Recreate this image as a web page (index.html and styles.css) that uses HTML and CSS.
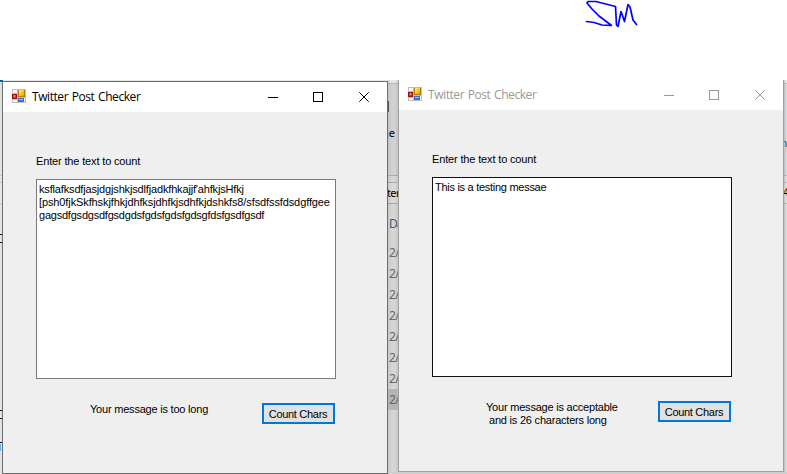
FILE: index.html
```
<!DOCTYPE html>
<html lang="en">
<head>
<meta charset="utf-8">
<title>Twitter Post Checker</title>
<link rel="stylesheet" href="styles.css">
</head>
<body>
<svg class="signature" width="90" height="40" viewBox="0 0 90 40"><path d="M16.5 21.5L24 22.5L32 25L41.500 25.500L29 16L22 9L17 3L18 1.500L26 1.500L45.500 6.500L46.500 25L48 26.500L51 11.500L54.500 21.500L58 4.500L60 7L63 20L66.500 24.500"/></svg>
<main class="desktop">
  <div class="top-edge"></div>
  <div class="ribbon"></div>
  <div class="strip"></div>
  <div class="header-row"></div>
  <div class="backdrop left-edge"><i class="accent"></i><i class="tick t1"></i><i class="tick t2"></i><i class="tick t3"></i><i class="tick t4"></i><i class="tick t5"></i><i class="link"></i></div>
  <div class="backdrop middle">
    <i class="glyph"></i><span class="name">ne</span><span class="filter">ter</span><span class="date-head">Da</span>
    <ul><li>2/</li><li>2/</li><li>2/</li><li>2/</li><li>2/</li><li>2/</li><li>2/</li><li class="selected">2/</li></ul>
  </div>
  <div class="backdrop right-edge"><span class="letter">n</span><span class="count">4</span></div>
  <div class="below"></div>

  <section class="window active">
    <header class="titlebar">
      <svg class="app-icon" width="14" height="14" viewBox="0 0 14 14"><use href="#form-icon"/></svg>
      <h1>Twitter Post Checker</h1>
      <svg class="controls" width="104" height="12" viewBox="0 0 104 12"><use href="#window-controls"/></svg>
    </header>
    <div class="form">
      <label><span class="w-label">Enter the text to count</span></label>
      <div class="textbox"><p class="l1">ksflafksdfjasjdgjshkjsdlfjadkfhkajjf'ahfkjsHfkj</p><p class="l2">[psh0fjkSkfhskjfhkjdhfksjdhfkjsdhfkjdshkfs8/sfsdfssfdsdgffgee</p><p class="l3">gagsdfgsdgsdfgsdgdsfgdsfgdsfgdsgfdsfgsdfgsdf</p></div>
      <footer><div class="result"><p class="r1">Your message is too long</p></div><button>Count Chars</button></footer>
    </div>
  </section>

  <section class="window inactive">
    <header class="titlebar">
      <svg class="app-icon" width="14" height="14" viewBox="0 0 14 14"><use href="#form-icon"/></svg>
      <h1>Twitter Post Checker</h1>
      <svg class="controls" width="104" height="12" viewBox="0 0 104 12"><use href="#window-controls"/></svg>
    </header>
    <div class="form">
      <label><span class="w-label">Enter the text to count</span></label>
      <div class="textbox"><p class="l4">This is a testing messae</p></div>
      <footer><div class="result"><p class="r2">Your message is acceptable</p><p class="r3">and is 26 characters long</p></div><button>Count Chars</button></footer>
    </div>
  </section>
</main>
<svg class="defs" width="0" height="0">
  <defs>
    <linearGradient id="gold" x2="1" y2="1"><stop stop-color="#fff0a0"/><stop offset=".5" stop-color="#fac832"/><stop offset="1" stop-color="#dc9a08"/></linearGradient>
    <g id="form-icon">
      <path d="M0 0H14V14H0Z" fill="#bdbdbd"/><path d="M1 1H5V4H1ZM1 11H5V13H1ZM12 9H13V13H12Z" fill="#fff"/>
      <path d="M0 5H5V10H0Z" fill="#9c1610"/><path d="M1 6H4V9H1Z" fill="#d23b28"/><path d="M2 6H3V8H2Z" fill="#f09a86"/>
      <path d="M6 1H13V8H6Z" fill="#b97c00"/><path d="M7 1H12V7H7Z" fill="url(#gold)"/>
      <path d="M6 9H12V13H6Z" fill="#3e6fd0"/><path d="M7 10H11V11H7Z" fill="#9cc0ff"/>
    </g>
    <g id="window-controls" fill="none" stroke="currentColor">
      <path d="M1 6.500H11M46.500 1.500H55.500V10.500H46.500Z" shape-rendering="crispEdges"/><path d="M92.300 1.300L101.700 10.700M101.700 1.300L92.300 10.700"/>
    </g>
  </defs>
</svg>
</body>
</html>
```
FILE: styles.css
```
* { box-sizing: border-box; }
body { margin: 0; width: 787px; height: 474px; overflow: hidden; background: #fff; font: 11px/13px "Liberation Sans", sans-serif; color: #000; }
h1, p, ul { margin: 0; padding: 0; }
p, span, h1 { white-space: pre; }
.signature { position: absolute; left: 570px; top: 0; fill: none; stroke: #00f; stroke-width: 1.7; stroke-linejoin: round; stroke-linecap: round; }
.defs { position: absolute; }
.desktop { position: absolute; top: 80px; left: 0; width: 787px; height: 394px; overflow: hidden; background: #d5d5d5; display: flex; flex-direction: column; }
.top-edge { height: 3px; flex: none; background: #e6e6e6; }
.ribbon { height: 93px; flex: none; background: #cfd1d3; border-top: 1px solid #b7b7b7; border-bottom: 1px solid #adadad; }
.strip { height: 7px; flex: none; background: #d6d6d6; border-bottom: 1px solid #ababab; }
.header-row { height: 21px; flex: none; background: #d9d9d9; border-bottom: 1px solid #ababab; }
.backdrop { position: absolute; top: 0; height: 394px; overflow: hidden; }
.backdrop > * { position: absolute; }
.left-edge { left: 0; width: 3px; background: rgba(255,255,255,.35); }
.accent { top: 0; left: 0; width: 7px; height: 2px; background: #075c9c; }
.tick { left: 0; width: 3px; height: 1px; background: #111; }
.t1 { top: 154px; } .t2 { top: 162px; } .t3 { top: 330px; } .t4 { top: 338px; } .t5 { top: 362px; }
.link { top: 364px; left: 0; width: 1px; height: 7px; background: #62b2dd; }
.middle { left: 388px; width: 10px; background: linear-gradient(90deg, rgba(0,0,0,.06), transparent 40%, transparent 70%, rgba(0,0,0,.07)); font: 12px/16px "Noto Sans", sans-serif; }
.glyph { left: -4px; top: 21px; width: 5px; height: 11px; background: #888; border-right: 1px solid #555; }
.name { left: -6px; top: 45px; font-size: 11px; }
.filter { left: -1px; top: 105px; font-size: 11px; letter-spacing: -.6px; }
.date-head { left: 1px; top: 136px; color: #4c5678; letter-spacing: -1px; }
.middle ul { top: 162px; left: 0; width: 10px; list-style: none; color: #666; }
.middle li { height: 21px; line-height: 21px; padding-left: 1px; font-size: 12px; letter-spacing: -.7px; }
.middle .selected { background: #b5b5b5; }
.right-edge { left: 783px; width: 4px; background: linear-gradient(90deg, rgba(0,0,0,.14), rgba(255,255,255,.3)); }
.letter { left: -2px; top: 57px; color: #345; }
.count { left: 0; top: 106px; }
.below { position: absolute; left: 388px; right: 0; top: 392px; height: 2px; background: #cecece; }
.window { position: absolute; width: 386px; height: 393px; border: 1px solid #6e6e6e; background: #efefef; display: flex; flex-direction: column; }
.active { left: 2px; top: 1px; }
.inactive { left: 398px; top: -1px; border-color: #a0a0a0; }
.titlebar { height: 30px; flex: none; background: #fff; display: flex; align-items: center; padding: 0 16px 0 9px; }
.app-icon { flex: none; margin-top: -2px; }
h1 { margin-left: 6px; width: 109px; font: 12px/16px "Open Sans", sans-serif; letter-spacing: -.43px; word-spacing: .9px; }
.controls { margin-left: auto; margin-top: -1px; }
.inactive h1, .inactive .controls { color: #999; }
.form { flex: 1; display: flex; flex-direction: column; padding: 43px 51px 0 33px; }
label { height: 24px; }
span.w-label { letter-spacing: -.15px; }
.textbox { width: 300px; height: 200px; background: #fff; border: 1px solid #7a7a7a; padding: 3px 0 0 2px; overflow: hidden; }
.inactive .textbox { border-color: #111; }
.textbox p { width: max-content; }
.l1 { letter-spacing: -.16px; }
.l2 { letter-spacing: -.11px; }
.l3 { letter-spacing: -.22px; }
.l4 { letter-spacing: -.28px; }
.r1, .r2, .r3 { letter-spacing: -.21px; }
footer { display: flex; justify-content: space-between; padding: 24px 1px 0 54px; }
.inactive .r3 { padding-left: 3px; }
button { width: 73px; height: 21px; margin: 0; padding: 1px 1px 0 0; border: 2px solid #0078d7; background: #e1e1e1; color: #000; font: inherit; letter-spacing: -.3px; text-align: center; }
```
